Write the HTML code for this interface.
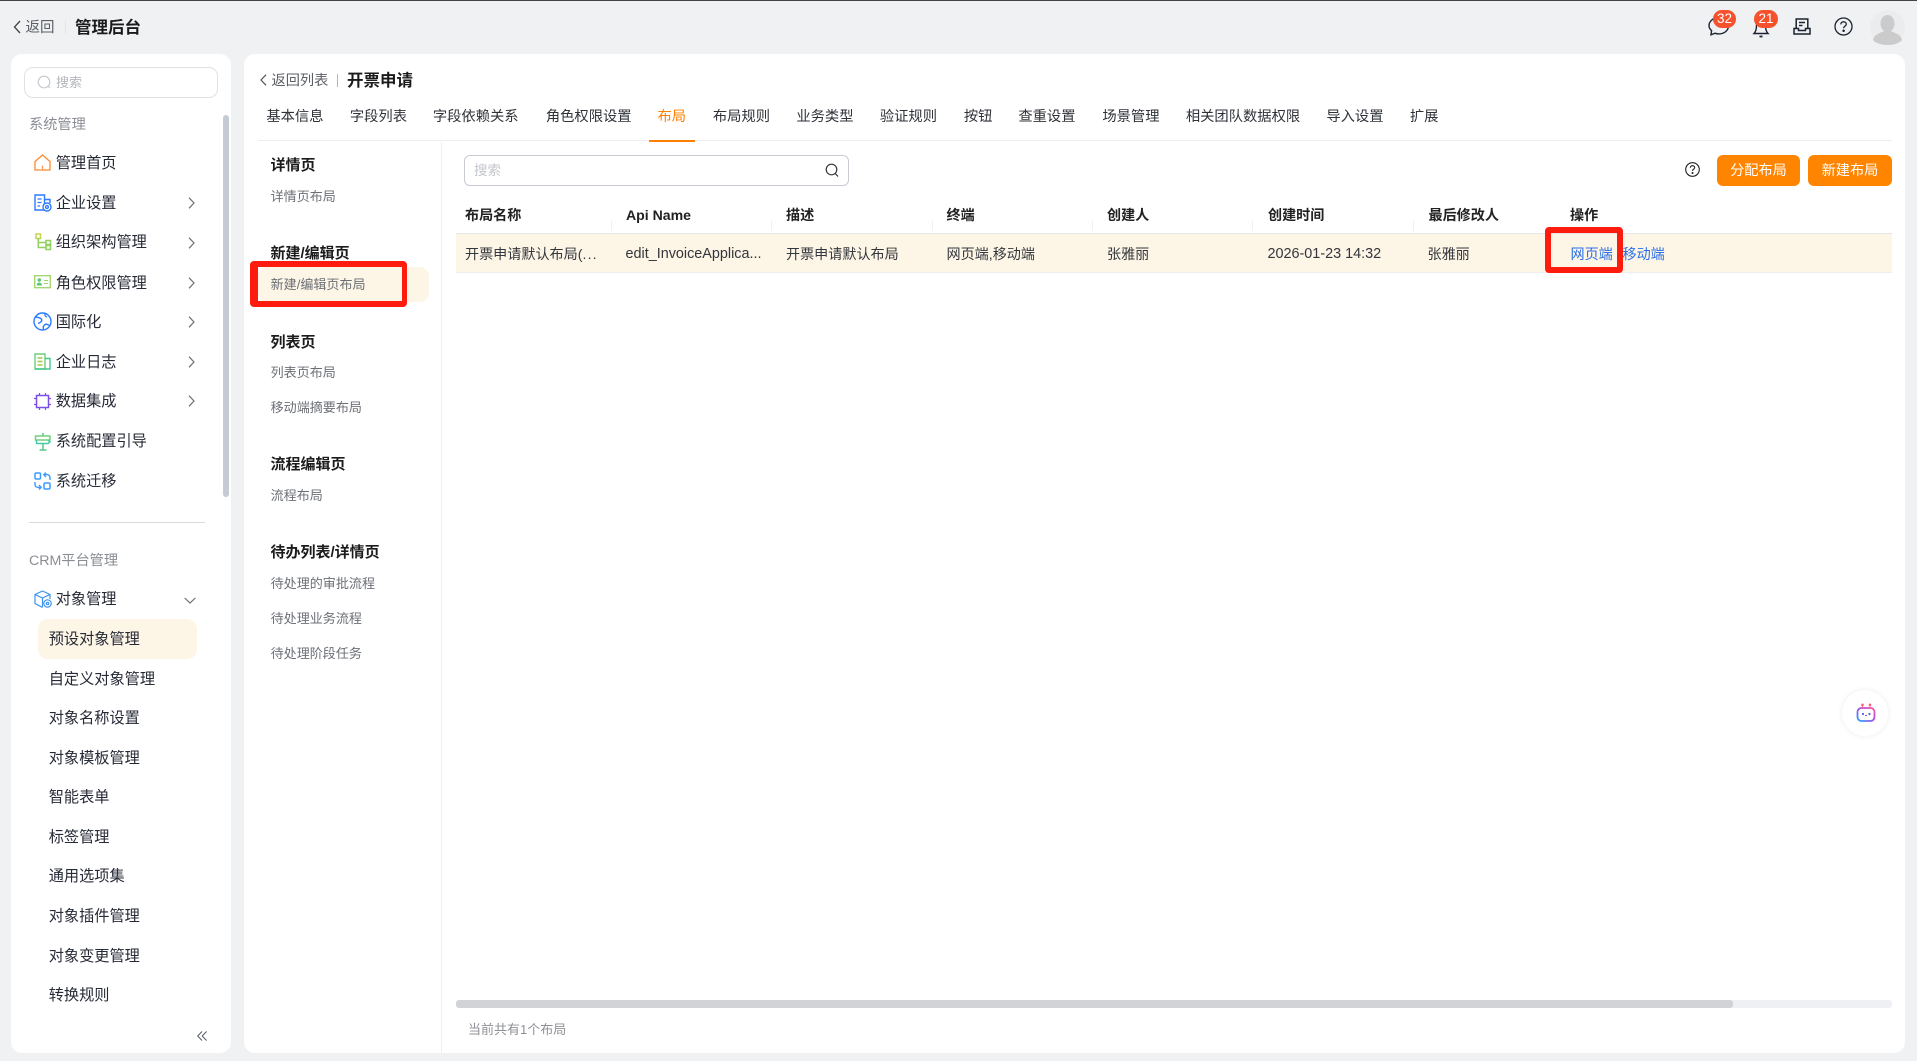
<!DOCTYPE html>
<html lang="zh-CN">
<head>
<meta charset="utf-8">
<title>管理后台</title>
<style>
*{box-sizing:border-box}
html,body{margin:0;padding:0}
body{width:1917px;height:1061px;position:relative;overflow:hidden;background:#eff1f3;font-family:"Liberation Sans","Noto Sans CJK SC",sans-serif;color:#2b2f38}
.a{position:absolute}
.t{position:absolute;height:20px;line-height:20px;white-space:nowrap;font-size:14.2px;margin-top:1px}
.n{font-size:15.2px;color:#262a36;margin-left:-.3px}
.g{color:#8a8d93}
.s{font-size:13.05px;color:#6c6f76;margin-left:-.4px}
.h{font-size:15px;font-weight:700;color:#1c1c1c;margin-left:-.5px}
.tab{color:#2f3238;font-size:14.3px;margin-left:-.2px}
.th{font-weight:700;color:#222;font-size:14.1px}
.td{color:#33363c;font-size:14.1px}
svg{position:absolute;overflow:visible}
</style>
</head>
<body>
<div class="a" style="left:0;top:0;width:1917px;height:1px;background:#444"></div>

<!-- Top bar -->
<svg style="left:13px;top:20px" width="8" height="14" fill="none" stroke="#444" stroke-width="1.3"><path d="M7 1L1.500 7L7 13"/></svg>
<div class="t" style="left:25.500px;top:17px;color:#5c5f66;font-size:14.500px">返回</div>
<div class="a" style="left:65px;top:20px;width:1px;height:14px;background:#e3e5e8"></div>
<div class="t" style="left:75px;top:17px;font-size:16.500px;font-weight:700;color:#1b1b1b">管理后台</div>

<!-- Top right icons -->
<svg style="left:1707px;top:14px" width="24" height="24" fill="none" stroke="#1c2230" stroke-width="1.4"><path d="M12 3.500c5.500 0 9.500 3.600 9.500 8.200s-4 8.200-9.500 8.200c-1.400 0-2.800-.2-4-.7L4 20.800l.6-4.200C3 15.200 2 13.500 2 11.700 2 7.100 6.500 3.500 12 3.500z"/></svg>
<div class="a" style="left:1713px;top:10px;width:23px;height:18px;border-radius:9px;background:#f5512c;color:#fff;font-size:13.500px;line-height:18px;text-align:center">32</div>
<svg style="left:1751px;top:14px" width="20" height="24" fill="none" stroke="#1c2230" stroke-width="1.4"><path d="M3 19.500c2-2 2.500-4 2.500-8 0-3.500 2-5.500 4.500-5.500s4.500 2 4.500 5.500c0 4 .5 6 2.500 8z"/><path d="M8.500 22.500h3" stroke-width="1.800"/></svg>
<div class="a" style="left:1754px;top:10px;width:24px;height:18px;border-radius:9px;background:#f5512c;color:#fff;font-size:13.500px;line-height:18px;text-align:center">21</div>
<svg style="left:1793px;top:18px" width="18" height="18" fill="none" stroke="#1c2230" stroke-width="1.500"><path d="M3.200 10.500V1h11.600v9.500"/><path d="M6 4.500h6M6 7.500h3.500"/><path d="M1 10.500h4.500v2h7v-2H17v5.500H1z"/></svg>
<svg style="left:1834px;top:17px" width="19" height="19" fill="none" stroke="#1c2230" stroke-width="1.300"><circle cx="9.500" cy="9.500" r="8.500"/><path d="M6.800 7.400c0-1.600 1.200-2.600 2.800-2.600s2.700 1 2.700 2.300c0 2-2.700 2-2.700 4.100"/><circle cx="9.600" cy="13.800" r=".6" fill="#1c2230"/></svg>
<svg style="left:1870px;top:10px" width="35" height="35"><circle cx="17.500" cy="17.500" r="17.500" fill="#ebecee"/><ellipse cx="17.500" cy="13.500" rx="7" ry="8.500" fill="#cbcbcb"/><path d="M3 30c1-6 8-7 11-9h7c3 2 10 3 11 9-3 3.500-9 5-14.500 5S6 33.500 3 30z" fill="#cbcbcb"/></svg>

<!-- Sidebar -->
<div class="a" style="left:11px;top:54px;width:220px;height:999px;background:#fff;border-radius:11px"></div>
<div class="a" style="left:24px;top:67px;width:194px;height:31px;border:1px solid #dfe1e6;border-radius:9px;background:#fff"></div>
<svg style="left:37px;top:75px" width="15" height="15" fill="none" stroke="#c6cad0" stroke-width="1.200"><circle cx="7" cy="7" r="5.800"/><path d="M11 11l2 2"/></svg>
<div class="t" style="left:56px;top:72px;font-size:13px;color:#b4b6bb">搜索</div>
<div class="t g" style="left:29px;top:114px">系统管理</div>
<div class="a" style="left:223px;top:115px;width:6px;height:382px;background:#c4cbd4;border-radius:3px"></div>

<!-- nav icons -->
<svg style="left:34px;top:154px" width="17" height="17" fill="none" stroke="#ff8a2a" stroke-width="1.300"><path d="M1 7.500L8.500 1 16 7.500V16H1z"/><path d="M8.500 11.500V16" stroke="#ff9a5a"/></svg>
<svg style="left:34px;top:194px" width="18" height="18" fill="none" stroke="#2f78ff" stroke-width="1.400"><path d="M1 16V1h9.500v15z"/><path d="M10.500 5.500H16V9"/><path d="M3.500 5h4M3.500 8.500h4M3.500 12h2.500" stroke-width="1.200"/><circle cx="13" cy="13" r="4" fill="#fff"/><circle cx="13" cy="13" r="1.400"/></svg>
<svg style="left:35px;top:233px" width="17" height="18" fill="none" stroke="#90cf60" stroke-width="1.500"><rect x="1" y="1" width="4.500" height="4.500" stroke="#c5d34e"/><path d="M3.300 5.500V14.500H10.500M3.300 9.500H10.500"/><rect x="11" y="7.500" width="4.500" height="4"/><rect x="11" y="12.500" width="4.500" height="4"/></svg>
<svg style="left:34px;top:275px" width="17" height="14" fill="none" stroke="#a0d468" stroke-width="1.300"><rect x=".7" y=".7" width="15.600" height="12"/><circle cx="5.300" cy="5" r="1.700" fill="#5cc878" stroke="none"/><path d="M2.600 10.500c.3-2.400 1.400-3 2.700-3s2.400.6 2.700 3z" fill="#5cc878" stroke="none"/><path d="M10 5.500h4M10 8.500h4" stroke="#a0d468" stroke-width="1"/></svg>
<svg style="left:33px;top:312px" width="19" height="19" fill="none" stroke="#2b7bff" stroke-width="1.400"><circle cx="9.500" cy="9.500" r="8.500"/><path d="M2.500 5c2.500.3 5 .7 6 2.200 1 1.600-1 3.600-3.500 4.300" /><path d="M10.500 17.500c-.8-2.500.3-4.500 2.500-5.500l3.700 1.500"/><path d="M12 1.500c-.5 2 0 3 2 3.500" stroke-width="1.200"/></svg>
<svg style="left:34px;top:353px" width="18" height="17" fill="none" stroke="#42c98c" stroke-width="1.400"><path d="M1 1h10v15H1z" stroke="#6bcf78"/><path d="M11 5.500h5V16H1"/><path d="M3.500 5h5M3.500 8.500h5M3.500 12h5" stroke="#a0c84e"/></svg>
<svg style="left:33px;top:392px" width="19" height="19" fill="none" stroke="#7c4ee8" stroke-width="1.500"><rect x="3.500" y="3.500" width="12" height="12"/><path d="M6.500 1v2.500M12.500 1v2.500M6.500 15.500V18M12.500 15.500V18M1 6.500h2.500M1 12.500h2.500M15.500 6.500H18M15.500 12.500H18" stroke-width="1.200"/></svg>
<svg style="left:34px;top:432px" width="18" height="19" fill="none" stroke="#54cc86" stroke-width="1.500"><path d="M9 1v3M9 11v7M5.500 18h7"/><path d="M1.500 4H16V8H1.500z" stroke="#72d07a"/><path d="M2.500 8v3.500H14l2-1.700L14 8" stroke="#45c9a6"/></svg>
<svg style="left:34px;top:472px" width="17" height="18" fill="none" stroke="#3b9cff" stroke-width="1.500"><rect x="1" y="1" width="5.500" height="6" rx="1.200"/><rect x="10" y="11" width="6" height="6" rx="1.200"/><path d="M1 10v2.500c0 2 1.500 3 3.500 3H7M5 13l2.200 2.500L5 17.500" stroke-width="1.400"/><path d="M16 8V5.500c0-2-1.500-3-3.500-3H10M12 .7L9.800 2.700 12 5" stroke-width="1.400"/></svg>

<div class="t n" style="left:56px;top:153px">管理首页</div>
<div class="t n" style="left:56px;top:193px">企业设置</div>
<div class="t n" style="left:56px;top:232px">组织架构管理</div>
<div class="t n" style="left:56px;top:273px">角色权限管理</div>
<div class="t n" style="left:56px;top:312px">国际化</div>
<div class="t n" style="left:56px;top:352px">企业日志</div>
<div class="t n" style="left:56px;top:391px">数据集成</div>
<div class="t n" style="left:56px;top:431px">系统配置引导</div>
<div class="t n" style="left:56px;top:471px">系统迁移</div>

<svg style="left:188px;top:197px" width="7" height="12" fill="none" stroke="#6b6f76" stroke-width="1.200"><path d="M1 .7L6 6 1 11.300"/></svg>
<svg style="left:188px;top:237px" width="7" height="12" fill="none" stroke="#6b6f76" stroke-width="1.200"><path d="M1 .7L6 6 1 11.300"/></svg>
<svg style="left:188px;top:277px" width="7" height="12" fill="none" stroke="#6b6f76" stroke-width="1.200"><path d="M1 .7L6 6 1 11.300"/></svg>
<svg style="left:188px;top:316px" width="7" height="12" fill="none" stroke="#6b6f76" stroke-width="1.200"><path d="M1 .7L6 6 1 11.300"/></svg>
<svg style="left:188px;top:356px" width="7" height="12" fill="none" stroke="#6b6f76" stroke-width="1.200"><path d="M1 .7L6 6 1 11.300"/></svg>
<svg style="left:188px;top:395px" width="7" height="12" fill="none" stroke="#6b6f76" stroke-width="1.200"><path d="M1 .7L6 6 1 11.300"/></svg>

<div class="a" style="left:29px;top:522px;width:176px;height:1px;background:#d9dadd"></div>
<div class="t g" style="left:29px;top:550px">CRM平台管理</div>
<svg style="left:34px;top:590px" width="18" height="18" fill="none" stroke="#3b94f0" stroke-width="1.200"><path d="M8.500 1L16 4.500V9M8.500 1L1 4.500v9l7.500 4M1 4.500L8.500 8 16 4.500M8.500 8v9"/><circle cx="13.500" cy="13.500" r="3.700" fill="#fff"/><circle cx="13.500" cy="13.500" r="1.200"/></svg>
<div class="t n" style="left:56px;top:589px">对象管理</div>
<svg style="left:184px;top:597px" width="12" height="7" fill="none" stroke="#6b6f76" stroke-width="1.200"><path d="M.7 1L6 6l5.300-5"/></svg>

<div class="a" style="left:38px;top:619px;width:159px;height:40px;background:#fdf5e6;border-radius:10px"></div>
<div class="t n" style="left:49px;top:629px">预设对象管理</div>
<div class="t n" style="left:49px;top:669px">自定义对象管理</div>
<div class="t n" style="left:49px;top:708px">对象名称设置</div>
<div class="t n" style="left:49px;top:748px">对象模板管理</div>
<div class="t n" style="left:49px;top:787px">智能表单</div>
<div class="t n" style="left:49px;top:827px">标签管理</div>
<div class="t n" style="left:49px;top:866px">通用选项集</div>
<div class="t n" style="left:49px;top:906px">对象插件管理</div>
<div class="t n" style="left:49px;top:946px">对象变更管理</div>
<div class="t n" style="left:49px;top:985px">转换规则</div>
<svg style="left:197px;top:1031px" width="10" height="10" fill="none" stroke="#555a63" stroke-width="1"><path d="M5 .5L.7 5 5 9.500M9.500 .5L5.200 5l4.300 4.500"/></svg>

<!-- Main panel -->
<div class="a" style="left:244px;top:54px;width:1661px;height:999px;background:#fff;border-radius:11px"></div>
<svg style="left:260px;top:74px" width="7" height="12" fill="none" stroke="#555" stroke-width="1.200"><path d="M6 .7L1 6l5 5.300"/></svg>
<div class="t" style="left:271.500px;top:70px;color:#5c5f66">返回列表</div>
<div class="a" style="left:337px;top:74px;width:1px;height:13px;background:#b5b7bb"></div>
<div class="t" style="left:347px;top:70px;font-size:16.500px;font-weight:700;color:#1b1b1b">开票申请</div>

<!-- Tabs -->
<div class="t tab" style="left:266.500px;top:106px">基本信息</div>
<div class="t tab" style="left:350px;top:106px">字段列表</div>
<div class="t tab" style="left:433px;top:106px">字段依赖关系</div>
<div class="t tab" style="left:546px;top:106px">角色权限设置</div>
<div class="t" style="left:657.500px;top:106px;color:#ff8000;font-size:14.300px">布局</div>
<div class="t tab" style="left:713px;top:106px">布局规则</div>
<div class="t tab" style="left:796.500px;top:106px">业务类型</div>
<div class="t tab" style="left:880px;top:106px">验证规则</div>
<div class="t tab" style="left:964px;top:106px">按钮</div>
<div class="t tab" style="left:1018.500px;top:106px">查重设置</div>
<div class="t tab" style="left:1102.500px;top:106px">场景管理</div>
<div class="t tab" style="left:1186px;top:106px">相关团队数据权限</div>
<div class="t tab" style="left:1326.500px;top:106px">导入设置</div>
<div class="t tab" style="left:1410px;top:106px">扩展</div>
<div class="a" style="left:258px;top:140px;width:1634px;height:1px;background:#eceef1"></div>
<div class="a" style="left:649px;top:140px;width:46px;height:2px;background:#ff8000"></div>
<div class="a" style="left:441px;top:142px;width:1px;height:911px;background:#eeeff1"></div>

<!-- Sub nav -->
<div class="t h" style="left:271px;top:155px">详情页</div>
<div class="t s" style="left:271px;top:186px">详情页布局</div>
<div class="t h" style="left:271px;top:243px">新建/编辑页</div>
<div class="a" style="left:258px;top:267px;width:171px;height:35px;background:#fdf5e6;border-radius:9px"></div>
<div class="t s" style="left:271px;top:274px">新建/编辑页布局</div>
<div class="a" style="left:250px;top:261px;width:157px;height:46px;border:solid #fe1c0e;border-width:6px 5px 6px 8px;border-radius:4px"></div>
<div class="t h" style="left:271px;top:332px">列表页</div>
<div class="t s" style="left:271px;top:362px">列表页布局</div>
<div class="t s" style="left:271px;top:397px">移动端摘要布局</div>
<div class="t h" style="left:271px;top:454px">流程编辑页</div>
<div class="t s" style="left:271px;top:485px">流程布局</div>
<div class="t h" style="left:271px;top:542px">待办列表/详情页</div>
<div class="t s" style="left:271px;top:573px">待处理的审批流程</div>
<div class="t s" style="left:271px;top:608px">待处理业务流程</div>
<div class="t s" style="left:271px;top:643px">待处理阶段任务</div>

<!-- Toolbar -->
<div class="a" style="left:464px;top:155px;width:385px;height:31px;border:1px solid #c9cbd2;border-radius:6px"></div>
<div class="t" style="left:474px;top:159.500px;font-size:13.500px;color:#c3c5ca">搜索</div>
<svg style="left:825px;top:163px" width="14" height="15" fill="none" stroke="#33363c" stroke-width="1.200"><circle cx="6.500" cy="6.500" r="5.300"/><path d="M10.300 10.500L13 13.500"/></svg>
<svg style="left:1685px;top:162px" width="15" height="15" fill="none" stroke="#222" stroke-width="1.100"><circle cx="7.500" cy="7.500" r="6.800"/><path d="M5.300 5.800c0-1.300 1-2.100 2.200-2.100s2.200.8 2.200 1.900c0 1.600-2.200 1.600-2.200 3.300"/><circle cx="7.500" cy="11" r=".5" fill="#222"/></svg>
<div class="a" style="left:1717px;top:155px;width:83px;height:31px;background:#ff8400;border-radius:6px;color:#fff;font-size:14.200px;line-height:33px;text-align:center">分配布局</div>
<div class="a" style="left:1808px;top:155px;width:84px;height:31px;background:#ff8400;border-radius:6px;color:#fff;font-size:14.200px;line-height:33px;text-align:center">新建布局</div>

<!-- Table -->
<div class="t th" style="left:465px;top:204px">布局名称</div>
<div class="t th" style="left:626px;top:204px">Api Name</div>
<div class="t th" style="left:786px;top:204px">描述</div>
<div class="t th" style="left:946.500px;top:204px">终端</div>
<div class="t th" style="left:1107px;top:204px">创建人</div>
<div class="t th" style="left:1268px;top:204px">创建时间</div>
<div class="t th" style="left:1428.500px;top:204px">最后修改人</div>
<div class="t th" style="left:1570px;top:204px">操作</div>
<div class="a" style="left:611px;top:221px;width:1px;height:10px;background:#eef0f6"></div>
<div class="a" style="left:771px;top:221px;width:1px;height:10px;background:#eef0f6"></div>
<div class="a" style="left:932px;top:221px;width:1px;height:10px;background:#eef0f6"></div>
<div class="a" style="left:1092px;top:221px;width:1px;height:10px;background:#eef0f6"></div>
<div class="a" style="left:1252px;top:221px;width:1px;height:10px;background:#eef0f6"></div>
<div class="a" style="left:1413px;top:221px;width:1px;height:10px;background:#eef0f6"></div>
<div class="a" style="left:456px;top:233px;width:1436px;height:40px;background:#fdf5e6;border-top:1px solid #e6e6e6;border-bottom:1px solid #eeeeee"></div>
<div class="t td" style="left:465px;top:243px">开票申请默认布局(<span style="letter-spacing:1.200px">...</span></div>
<div class="t td" style="left:625.500px;top:243px;font-size:14.400px">edit_InvoiceApplica...</div>
<div class="t td" style="left:786px;top:243px">开票申请默认布局</div>
<div class="t td" style="left:946.500px;top:243px">网页端,移动端</div>
<div class="t td" style="left:1107px;top:243px">张雅丽</div>
<div class="t td" style="left:1267.500px;top:243px;font-size:14.400px">2026-01-23 14:32</div>
<div class="t td" style="left:1427.500px;top:243px">张雅丽</div>
<div class="t td" style="left:1570.500px;top:243px;color:#2a6fe8">网页端</div>
<div class="t td" style="left:1622.500px;top:243px;color:#2a6fe8">移动端</div>
<div class="a" style="left:1545px;top:227px;width:78px;height:46px;border:6px solid #fe1c0e;border-radius:4px"></div>

<!-- Bottom -->
<div class="a" style="left:456px;top:1000px;width:1436px;height:8px;background:#eff0f4;border-radius:3px"></div>
<div class="a" style="left:456px;top:1000px;width:1277px;height:8px;background:#d2d3d7;border-radius:3px"></div>
<div class="t" style="left:468px;top:1019px;font-size:13px;color:#8f9196">当前共有1个布局</div>

<!-- Bot -->
<div class="a" style="left:1842px;top:690px;width:46px;height:46px;border-radius:50%;background:#fff;box-shadow:0 0 6px rgba(0,0,0,.08)"></div>
<svg style="left:1856px;top:703px" width="20" height="20" fill="none">
<defs><linearGradient id="bg" x1="0" y1="1" x2="1" y2="0"><stop offset="0" stop-color="#22a8ff"/><stop offset=".5" stop-color="#a04df0"/><stop offset="1" stop-color="#ff4fa0"/></linearGradient></defs>
<rect x="1.500" y="5" width="17" height="13" rx="4" stroke="url(#bg)" stroke-width="1.800"/>
<circle cx="6.500" cy="1.800" r="1.300" fill="#ff5a7a"/><circle cx="14" cy="1.800" r="1.300" fill="#ff5a7a"/>
<path d="M6.500 3v2M14 3v2" stroke="#ff5a9a" stroke-width="1"/>
<circle cx="7" cy="11" r="1.100" fill="#5a5ae0"/><circle cx="13.500" cy="11" r="1.100" fill="#5a5ae0"/>
<path d="M9 12.500h2" stroke="#7a5ae0" stroke-width="1"/>
</svg>
</body>
</html>
